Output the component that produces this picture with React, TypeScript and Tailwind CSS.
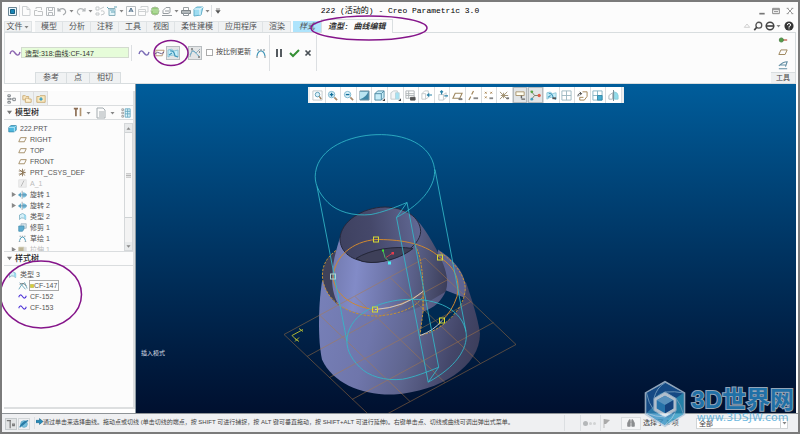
import React from "react";

type IconProps = { children: React.ReactNode; className?: string };

const Icon: React.FC<IconProps> = ({ children, className = "h-3 w-3" }) => (
  <svg
    viewBox="0 0 12 12"
    fill="none"
    stroke="#8a9298"
    className={`block shrink-0 ${className}`}
    aria-hidden="true"
  >
    {children}
  </svg>
);

const plane = <path d="M3.5 3.5H11L8.5 9H1Z" stroke="#a08a62" strokeWidth="1.2" />;
const curve = (color: string) => (
  <path d="M1 7C2 3 4 3 6 6S10 9 11 5" stroke={color} strokeWidth="1.4" />
);
const surface = (
  <>
    <path d="M2 10V4Q6 0 10 4V10L7 8Q4 7 2 10Z" fill="#d4eff8" stroke="#76aabd" />
    <path d="M8 3V8L11 10V5Z" fill="#9bd9ee" stroke="none" />
  </>
);
const cube = (
  <>
    <path d="M1 4.5L4 2H11V8L8.500 10.500H1Z" fill="#4db8df" stroke="#3a87a8" />
    <path d="M1 4.500H8.500V10.500M8.500 4.500L11 2" stroke="#d4f3fc" />
  </>
);
const revolve = (
  <>
    <path d="M0 6.500L4 3V10Z" fill="#5fb2d4" stroke="none" />
    <path d="M6 3Q11 3 11.500 6.500Q11 10 6 10Z" fill="#79bddb" stroke="none" />
    <path d="M5.500 1V12" stroke="#8b9aa3" />
    <path d="M1 6.500H12" stroke="#4c83a3" />
  </>
);
const arcCurve = (
  <>
    <path d="M2 9Q3 4 6 4T10 9" stroke="#3f96b8" strokeWidth="1.2" />
    <path d="M2 3H10M1 10H3M9 10H11" stroke="#75868f" strokeDasharray="2 1" />
  </>
);
const styleEdit = (
  <>
    <path d="M1 10V3Q5 1 7 4L11 3V10Q6 6 1 10Z" fill="#c7eef9" stroke="#8cc6d8" />
    <path d="M3 4Q7 3 8 9L11 10M5 6L2 8" stroke="#3f97bb" strokeWidth="1.2" />
  </>
);
const folderStar = (
  <>
    <path d="M1 10V3H4L5 2H11V10Z" fill="#f8e8bd" stroke="#c6a66c" />
    <path d="M6 4V8M4 6H8" stroke="#2e9ac3" strokeWidth="1.5" />
  </>
);
const structure = (
  <path d="M1 1H4V3H1ZM1 5H4V7H1ZM1 9H4V11H1ZM4 6H7M7 5H10V8H7Z" stroke="#6f757a" />
);

const Caret: React.FC = () => (
  <svg viewBox="0 0 7 12" className="block h-3 w-[7px] shrink-0" aria-hidden="true">
    <path d="M1.500 5H5.500L3.500 7.500Z" fill="#858585" />
  </svg>
);

const Separator: React.FC<{ className?: string }> = ({ className = "h-4" }) => (
  <span className={`block w-px shrink-0 bg-[#dcdfe2] ${className}`} />
);

type Quick = { label: string; icon: React.ReactNode; caret?: boolean };

const quickAccess: Quick[] = [
  { label: "新建", icon: <path d="M2.500 1.500H7L10 4.500V10.500H2.500ZM7 1.500V4.500H10" stroke="#cdd0d2" /> },
  { label: "打开", icon: <path d="M2.500 10.500V5.500H5L6 6.500H10.500V10.500ZM4 4V2.500H9.500V5" stroke="#c2c4c5" /> },
  { label: "保存", icon: <path d="M2.500 2.500H10.500V10.500H2.500ZM4.500 2.500V5.500H8.500V2.500M4.500 10V7.500H8.500V10" stroke="#b6babd" /> },
  { label: "撤消", caret: true, icon: <path d="M2 3V6H5M2 6Q6 2 9 5Q11 8 7 10" stroke="#a4a8ab" strokeWidth="1.200" /> },
  { label: "重做", caret: true, icon: <path d="M10 3V6H7M10 6Q6 2 3 5Q1 8 5 10" stroke="#b4b8ba" strokeWidth="1.200" /> },
  { label: "重新生成", icon: <path d="M2 2H5V5H2ZM2 8H5V10H2ZM6 4L10 2M7 6Q11 5 10 9L7 10" stroke="#c4c8ca" /> },
  { label: "重新生成管理器", caret: true, icon: (
    <>
      <path d="M3 3.500H9V10.500H3Z" fill="#e3f4f9" stroke="#8db2bd" />
      <path d="M4 5H8M5 7H9M1 2L3 4M8 2H11" stroke="#62a4b8" />
    </>
  ) },
  { label: "注释", icon: (
    <>
      <path d="M1.500 1.500H10.500V10.500H1.500Z" stroke="#b7bcbf" />
      <path d="M4 7L6 3L8 7M5 6H7" stroke="#496b86" />
    </>
  ) },
  { label: "窗口", icon: <path d="M4 3V1.500H11V7H9M1.500 4.500H8.500V10.500H1.500ZM1.500 6.500H8.500" stroke="#cfd2d3" /> },
  { label: "模型播放器", icon: (
    <>
      <circle cx="6" cy="6" r="4" fill="#93cc76" stroke="#a9bd9c" />
      <path d="M2 5H10M4 7H9" stroke="#c4e3b3" />
    </>
  ) },
  { label: "视图", caret: true, icon: <path d="M2 8.500V5.500L5 2.500H9V7.500L7 8.500H2ZM1 10.500H11M4 6H8" stroke="#979da1" /> },
  { label: "打印", icon: (
    <>
      <path d="M3.500 5V2.500H8.500V5" stroke="#9aa0a3" />
      <path d="M1.500 5.500H10.500V8.500H1.500Z" fill="#b2b8bb" stroke="#7f868a" />
      <path d="M3.500 8.500H8.500V10.500H3.500Z" fill="#fff" />
    </>
  ) },
  { label: "零件", caret: true, icon: (
    <>
      <path d="M2 4L5 2H11L9 10L2 11Z" fill="#9ddcf1" stroke="#65b0cb" />
      <path d="M2 4H8V10M8 4L11 2" stroke="#eefafd" />
    </>
  ) },
];

const ribbonTabs = ["模型", "分析", "注释", "工具", "视图", "柔性建模", "应用程序", "渲染"];

const TitleBar: React.FC = () => (
  <header className="relative flex h-[18px] items-center pl-1 pr-1">
    <Icon>
      <path d="M2.500 2.500H10.500V10.500H2.500Z" fill="#eaf7fc" stroke="#6c8492" />
      <path d="M4.500 4.500H8.500V8.500H4.500Z" fill="#1785b5" stroke="#155e83" />
    </Icon>
    <span className="flex w-0.5 justify-center">
      <Separator className="h-3" />
    </span>
    {quickAccess.map((item) => (
      <button key={item.label} aria-label={item.label} className="flex">
        <Icon>{item.icon}</Icon>
        {item.caret && <Caret />}
      </button>
    ))}
    <Separator className="h-3" />
    <button aria-label="自定义快速访问工具栏" className="ml-0.5">
      <Icon className="h-2 w-2">
        <path d="M3 3H9" stroke="#555" />
        <path d="M2 5H10L6 10Z" fill="#555" stroke="none" />
      </Icon>
    </button>
    <h1 className="pointer-events-none absolute inset-x-0 text-center font-['Liberation_Mono','Noto_Sans_CJK_SC',monospace] text-[8px] text-black">
      222 (活动的) - Creo Parametric 3.0
    </h1>
    <div className="ml-auto flex items-center gap-1.5">
      <button aria-label="最小化">
        <Icon className="h-2 w-2"><path d="M2 10H10" stroke="#777" strokeWidth="2.500" /></Icon>
      </button>
      <button aria-label="还原">
        <Icon className="h-2 w-2"><path d="M1 2H11V10H1ZM1 4H11M3 7H9" stroke="#888" strokeWidth="1.500" /></Icon>
      </button>
      <button aria-label="关闭">
        <Icon className="h-2 w-2"><path d="M2 2L10 10M10 2L2 10M1 2H4M8 2H11M1 10H4M8 10H11" stroke="#999" strokeWidth="1.500" /></Icon>
      </button>
    </div>
  </header>
);

const TabRow: React.FC = () => (
  <nav className="flex h-3 items-end pl-0.5 pr-1 text-[8px] leading-[11px] text-[#505356]">
    <button className="mr-[3px] flex h-[11px] w-7 items-center justify-center border border-[#dfe3e5] bg-[#f0f2f3]">
      文件<Caret />
    </button>
    {ribbonTabs.map((tab) => (
      <button key={tab} className="h-[11px] border-t border-[#dfe3e5] bg-[#f0f2f3] px-1.5 leading-[10px] shadow-[inset_-1px_0_#dfe3e5]">
        {tab}
      </button>
    ))}
    <button className="ml-0.5 h-[11px] bg-[#aee4fc] px-1.5 italic">样式</button>
    <button className="relative z-10 -mb-px h-[14px] border-x border-t border-[#dadfe1] bg-[#fcfcfc] px-1.5 font-['Liberation_Mono','Noto_Sans_CJK_SC',monospace] font-bold italic text-[#333]">
      造型: 曲线编辑
    </button>
    <div className="ml-auto flex items-center gap-0.5">
      <button aria-label="最小化功能区">
        <Icon className="h-2 w-2"><path d="M2 8L6 3L10 8Z" stroke="#bbb" /></Icon>
      </button>
      <button aria-label="命令搜索">
        <Icon className="h-[10px] w-[10px]">
          <circle cx="7" cy="5" r="3.500" stroke="#555" strokeWidth="1.600" />
          <path d="M4.500 7.500L1.500 11" stroke="#444" strokeWidth="2" />
        </Icon>
      </button>
      <button aria-label="PTC 社区" className="flex items-center">
        <Icon className="h-[10px] w-[10px]">
          <circle cx="6" cy="6" r="4.500" stroke="#444" strokeWidth="1.800" />
          <path d="M1 6H11" stroke="#444" strokeWidth="2" />
        </Icon>
        <Caret />
      </button>
      <button aria-label="帮助">
        <Icon className="h-[10px] w-[10px]">
          <circle cx="6" cy="6" r="5.500" fill="#333" stroke="none" />
          <path d="M4 5Q4 3 6 3T8 5Q8 6 6 6.500V8M6 9V10" stroke="#fff" strokeWidth="1.200" />
        </Icon>
      </button>
    </div>
  </nav>
);

const Ribbon: React.FC = () => (
  <section className="mx-0.5 flex h-[52px] border border-[#d8dddf] bg-[#fcfcfc]">
    <div className="flex flex-1 flex-col justify-between">
      <div className="flex h-10 items-center pl-1">
        <Icon>{curve("#8b65b0")}</Icon>
        <input
          aria-label="曲线"
          readOnly
          value="造型:318:曲线:CF-147"
          className="h-[11px] w-[108px] border border-[#d3dacf] bg-[#e6fcd9] px-[3px] font-['Liberation_Sans','Noto_Sans_CJK_SC',sans-serif] text-[7px] text-[#333]"
        />
        <span className="mx-0.5"><Separator /></span>
        <button aria-label="自由曲线" className="ml-1">
          <Icon>{curve("#796bb5")}</Icon>
        </button>
        <button aria-label="平面曲线" className="ml-1">
          <Icon className="h-3 w-[11px]">
            <path d="M2 3H11L9 9H2Z" stroke="#b59370" />
            <path d="M1 7Q4 4 6 6T11 5" stroke="#655788" />
          </Icon>
        </button>
        <button aria-label="曲面上的曲线" className="ml-px border border-[#b8bdc0] bg-[#e3e5e6]">
          <Icon>{styleEdit}</Icon>
        </button>
        <button aria-label="控制点" className="ml-2 border border-[#b8bdc0] bg-[#e3e5e6]">
          <Icon>
            <path d="M1 10L3 3L7 6L11 2" stroke="#9aaeb9" />
            <path d="M1 8Q4 2 6 5T10 9" stroke="#6caecb" />
            <path d="M2 2H4M10 5H11M9 10H11" stroke="#777" strokeWidth="1.500" />
          </Icon>
        </button>
        <label className="ml-1 flex items-center gap-[3px] text-[7px] text-[#444]">
          <input type="checkbox" className="h-[7px] w-[7px] appearance-none border border-[#aaa] bg-white" />
          按比例更新
        </label>
        <button aria-label="更新" className="ml-1"><Icon>{arcCurve}</Icon></button>
        <span className="ml-0.5"><Separator className="h-9" /></span>
        <button aria-label="暂停" className="ml-[3px]">
          <Icon><path d="M4 2V10M8 2V10" stroke="#555b60" strokeWidth="2" /></Icon>
        </button>
        <button aria-label="确定" className="ml-[3px]">
          <Icon><path d="M2 6L5 9L11 3" stroke="#359035" strokeWidth="2" /></Icon>
        </button>
        <button aria-label="取消" className="ml-0.5">
          <Icon><path d="M3.500 3.500L8.500 8.500M8.500 3.500L3.500 8.500" stroke="#484f55" strokeWidth="1.700" /></Icon>
        </button>
        <span className="ml-0.5"><Separator className="h-9" /></span>
      </div>
      <div className="ml-[30px] flex h-[11px] text-[8px] leading-[10px] text-[#555]">
        {["参考", "点", "相切"].map((name) => (
          <button key={name} className="border-r border-t border-[#d9dee0] bg-[#f0f2f3] px-[7px] first:border-l">
            {name}
          </button>
        ))}
      </div>
    </div>
    <div className="flex w-6 flex-col items-center justify-between pt-0.5">
      <button aria-label="点">
        <Icon className="h-[10px] w-[10px]">
          <path d="M5 6H11" stroke="#cc806f" strokeWidth="2" />
          <circle cx="4" cy="6" r="2.500" fill="#529c48" stroke="#4c7e46" />
        </Icon>
      </button>
      <button aria-label="平面"><Icon className="h-[10px] w-[10px]">{plane}</Icon></button>
      <button aria-label="曲面">
        <Icon className="h-[10px] w-[10px]">
          <path d="M1 7Q6 2 11 2L9 8M3 6H9M1 10.500H11" stroke="#618da3" strokeWidth="1.300" />
        </Icon>
      </button>
      <span className="w-full border-t border-[#d9dee0] bg-[#eef0f1] text-center text-[7px] leading-[10px] text-[#444]">
        工具
      </span>
    </div>
  </section>
);

type Node = { name: string; icon: React.ReactNode; branch?: boolean; dim?: boolean };

const modelTree: Node[] = [
  { name: "RIGHT", icon: plane },
  { name: "TOP", icon: plane },
  { name: "FRONT", icon: plane },
  { name: "PRT_CSYS_DEF", icon: (
    <path d="M2 2L6 6L2 10M1 4H5M1 8H6M6 1V11M6 6H10M9 5V7M9 2L6 6L9 10" stroke="#8b7555" strokeWidth="1.200" />
  ) },
  { name: "A_1", dim: true, icon: (
    <>
      <path d="M1 1H11V11H1Z" fill="#eee" stroke="#ddd" />
      <path d="M8 2L4 10" stroke="#aaa" />
    </>
  ) },
  { name: "旋转 1", branch: true, icon: revolve },
  { name: "旋转 2", branch: true, icon: revolve },
  { name: "类型 2", icon: surface },
  { name: "修剪 1", icon: (
    <>
      <path d="M4 1H11V7H4Z" fill="#d5e4eb" stroke="#9eb2bf" />
      <path d="M1 4H8V8L6 11H1Z" fill="#5dacd0" stroke="#488fae" />
    </>
  ) },
  { name: "草绘 1", icon: arcCurve },
  { name: "拉伸 1", branch: true, dim: true, icon: (
    <>
      <path d="M1 3H8V10H1Z" fill="#bdb493" stroke="#c4bda2" />
      <path d="M8 3H11V8H8Z" fill="#ddd" stroke="#ddd" />
    </>
  ) },
];

const PanelHeader: React.FC<{ title: string; children?: React.ReactNode }> = ({ title, children }) => (
  <div className="flex h-[14px] shrink-0 items-center border-b border-[#dadddf] pl-[3px]">
    <svg viewBox="0 0 7 7" className="mr-[3px] block h-[5px] w-[5px]" aria-hidden="true">
      <path d="M0 1H7L3.500 6Z" fill="#777" />
    </svg>
    <h2 className="text-[8px] font-medium text-[#222]">{title}</h2>
    {children}
  </div>
);

const SidePanel: React.FC = () => (
  <aside className="flex w-[134px] shrink-0 flex-col border-r border-[#8d9aa2] bg-white pb-1 pl-0.5 pt-[7px]">
    <div className="flex min-h-0 flex-1 flex-col border-b-2 border-r-2 border-[#dddfe0] bg-[#fcfcfc]">
      <div className="flex h-[15px] shrink-0 border-b border-[#dadddf]">
        <button aria-label="模型树" className="flex w-4 items-center justify-center border-t border-[#ddd]">
          <Icon className="h-[10px] w-[10px]">{structure}</Icon>
        </button>
        <button aria-label="文件夹浏览器" className="flex w-[14px] items-center justify-center border-x border-t border-[#ddd] bg-[#edf0f1]">
          <Icon className="h-[10px] w-[10px]">
            <path d="M1 7V2H4L5 3H8V7Z" fill="#f9e8c4" stroke="#c9a76d" />
            <path d="M4 10V5H7L8 6H11V10Z" fill="#fff2d2" stroke="#c9a76d" />
          </Icon>
        </button>
        <button aria-label="收藏夹" className="flex w-[14px] items-center justify-center border-r border-t border-[#ddd] bg-[#edf0f1]">
          <Icon className="h-[10px] w-[10px]">{folderStar}</Icon>
        </button>
      </div>
      <PanelHeader title="模型树">
        <div className="ml-auto flex items-center gap-[3px] pr-0.5">
          <button aria-label="设置" className="flex">
            <Icon className="h-[10px] w-[10px]">
              <path d="M1 2H6M3.500 2V11" stroke="#8b6d54" strokeWidth="2" />
              <path d="M9 1V11" stroke="#b09370" strokeWidth="2" />
            </Icon>
            <span className="ml-0.5 flex items-center"><Caret /></span>
          </button>
          <button aria-label="显示" className="flex">
            <Icon><path d="M2 1H8L10 3V11H2ZM4 5H9M4 7H9M4 9H9" stroke="#a4acb0" /></Icon>
            <span className="ml-0.5"><Caret /></span>
          </button>
          <button aria-label="树列" className="ml-0.5">
            <Icon className="h-[10px] w-[10px]">
              <path d="M1 1H3V3H1ZM1 5H3V7H1ZM1 9H3V11H1Z" stroke="#999" />
              <path d="M5 1H11V11H5ZM8 1V11M5 4H11M5 7H11" fill="#dff5fc" stroke="#5fa4bd" />
            </Icon>
          </button>
        </div>
      </PanelHeader>
      <div className="flex h-[131px] shrink-0 pt-[3px]">
        <ul className="flex-1 overflow-hidden text-[7px] leading-[11px] text-[#555]">
          <li className="flex h-[11px] items-center gap-[3px] pl-1">
            <Icon className="h-[9px] w-[9px]">{cube}</Icon>222.PRT
          </li>
          {modelTree.map((node) => (
            <li key={node.name} className={`flex h-[11px] items-center ${node.dim ? "text-[#bbb]" : ""}`}>
              <span className="flex w-[14px] justify-center pl-1">
                {node.branch && (
                  <svg viewBox="0 0 6 6" className="h-[5px] w-[5px]" aria-hidden="true">
                    <path d="M1 0V6L6 3Z" fill="#888" />
                  </svg>
                )}
              </span>
              <Icon className="mr-[3px] h-[9px] w-[9px]">{node.icon}</Icon>
              {node.name}
            </li>
          ))}
        </ul>
        <div className="flex w-[9px] flex-col border border-[#d5d8da] bg-[#f3f3f3]">
          <button aria-label="向上滚动" className="flex h-2 items-center justify-center bg-[#e8eaeb]">
            <Icon className="h-[5px] w-[5px]"><path d="M1 9L6 3L11 9Z" fill="#888" stroke="none" /></Icon>
          </button>
          <div className="flex h-[86px] items-center justify-center border-y border-[#cfd3d5] bg-[#fafafa]">
            <Icon className="h-[7px] w-[5px]"><path d="M0 2H12M0 6H12M0 10H12" stroke="#aaa" strokeWidth="2" /></Icon>
          </div>
          <button aria-label="向下滚动" className="mt-auto flex h-2 items-center justify-center bg-[#e8eaeb]">
            <Icon className="h-[5px] w-[5px]"><path d="M1 3H11L6 9Z" fill="#888" stroke="none" /></Icon>
          </button>
        </div>
      </div>
      <div className="border-t border-[#dadddf]">
        <PanelHeader title="样式树" />
      </div>
      <ul className="pt-[3px] text-[7px] leading-[11px] text-[#555]">
        <li className="flex h-[11px] items-center gap-[3px] pl-1">
          <Icon className="h-[9px] w-[9px]">{surface}</Icon>类型 3
        </li>
        <li className="flex h-[11px] items-center pl-[14px]">
          <Icon className="h-[10px] w-[10px]">
            <path d="M2 2L9 10M1 10L4 5L8 2L11 9" stroke="#599bb1" />
            <path d="M2 4Q6 1 10 6" stroke="#777" />
          </Icon>
          <span className="ml-px flex h-[11px] items-center border border-[#aaa] pr-px leading-[9px]">
            <Icon className="h-1 w-1"><path d="M1 1H11V11H1Z" fill="#d8cf35" stroke="#888a30" /></Icon>
            CF-147
          </span>
        </li>
        {["CF-152", "CF-153"].map((name) => (
          <li key={name} className="flex h-[11px] items-center gap-[3px] pl-[14px]">
            <Icon className="h-[9px] w-[9px]">{curve("#4c31d6")}</Icon>
            {name}
          </li>
        ))}
      </ul>
    </div>
  </aside>
);

const more = <path d="M9 12H12V9Z" fill="#444" stroke="none" />;

type Tool = { label: string; icon: React.ReactNode; pressed?: boolean };

const viewTools: Tool[] = [
  { label: "重新调整", icon: (
    <>
      <path d="M1 1H11V11H1Z" stroke="#c0c6c8" />
      <circle cx="6" cy="5" r="2.500" fill="#dbf1f9" stroke="#5a9bb6" />
      <path d="M8 7L10 10" stroke="#9b7b59" strokeWidth="1.500" />
    </>
  ) },
  { label: "放大", icon: (
    <>
      <circle cx="5" cy="5" r="3.500" fill="#dff4fb" stroke="#76b4cd" />
      <path d="M3 5H7M5 3V7" stroke="#116e9a" strokeWidth="1.500" />
      <path d="M8 8L11 11" stroke="#a88a6c" strokeWidth="1.800" />
    </>
  ) },
  { label: "缩小", icon: (
    <>
      <circle cx="5" cy="5" r="3.500" fill="#dff4fb" stroke="#76b4cd" />
      <path d="M3 5H7" stroke="#116e9a" strokeWidth="1.500" />
      <path d="M8 8L11 11" stroke="#a88a6c" strokeWidth="1.800" />
    </>
  ) },
  { label: "重画", icon: (
    <>
      <path d="M1 1H11V11H1Z" fill="#3f87a6" stroke="#809ba7" />
      <path d="M1 2H10Q8 8 1 10Z" fill="#b9e4f1" stroke="none" />
    </>
  ) },
  { label: "显示样式", icon: (
    <>
      <path d="M1 4L4 1H11V8L8 11H1Z" fill="#c7edf8" stroke="#4d88a1" />
      <path d="M1 4H8V11M8 4L11 1" stroke="#4d88a1" />
      {more}
    </>
  ) },
  { label: "已保存方向", icon: (
    <>
      <path d="M1 3L4 1H8V8L6 10H1Z" fill="#f4f6f7" stroke="#bfc8cc" />
      <path d="M6 3H10V10H6Z" fill="#a5e2f2" stroke="#b6d4dc" />
      {more}
    </>
  ) },
  { label: "视图管理器", icon: (
    <>
      <path d="M1 1H10V9H1ZM1 4H10M1 6H10M4 1V9" stroke="#afb5b7" />
      <path d="M6 8H11V11H6Z" fill="#555" stroke="#555" />
    </>
  ) },
  { label: "透视图", icon: (
    <>
      <path d="M1 4L4 1H8V8L5 10H1ZM1 4H5V10" stroke="#c3c8ca" />
      <path d="M6 5.500L9 3V5H12V6H9V8Z" fill="#2b83a9" stroke="none" />
    </>
  ) },
  { label: "注释方向", icon: (
    <>
      <path d="M2 5H7V11H2ZM7 5L10 3V8L7 11" stroke="#c3c8ca" />
      <path d="M5 1V5M3.500 2.500L5 1L6.500 2.500M8 6.500H12" stroke="#2b83a9" strokeWidth="1.300" />
    </>
  ) },
  { label: "平面显示", icon: (
    <>
      {plane}
      <path d="M7.500 9.500H11V10.500H7.500Z" fill="#777" stroke="#777" />
    </>
  ) },
  { label: "轴显示", icon: (
    <>
      <path d="M6 1L4 5M3 7L1 11" stroke="#a08559" strokeWidth="1.300" />
      <path d="M6 9H11" stroke="#888" strokeWidth="2" />
    </>
  ) },
  { label: "点显示", icon: (
    <>
      <path d="M2 2L4 4M4 2L2 4M8 2L10 4M10 2L8 4M2 7L4 9M4 7L2 9" stroke="#a98451" />
      <path d="M7 9H11" stroke="#888" strokeWidth="2" />
    </>
  ) },
  { label: "坐标系显示", icon: (
    <>
      <path d="M1 2L9 10M9 2L1 10M5 3V9M2 6H10" stroke="#9b8b6a" />
      <path d="M8 9H11" stroke="#777" strokeWidth="2" />
    </>
  ) },
  { label: "注释显示", pressed: true, icon: (
    <>
      <path d="M1 2H10V6H1Z" fill="#fffef0" stroke="#a8946f" />
      <path d="M7 6V9M7 10H11" stroke="#666" strokeWidth="1.500" />
    </>
  ) },
  { label: "旋转中心", pressed: true, icon: (
    <>
      <path d="M1 1L5 6H10M5 6L1 11" stroke="#747b62" />
      <circle cx="2" cy="2" r="1.500" fill="#58a446" stroke="none" />
      <circle cx="10" cy="6" r="1.800" fill="#e05e48" stroke="none" />
      <circle cx="2" cy="10" r="1.500" fill="#4a9cba" stroke="none" />
    </>
  ) },
  { label: "样式显示", icon: <>{styleEdit}<path d="M7 9H11" stroke="#555" strokeWidth="2" /></> },
  { label: "活动平面", icon: <path d="M1 1H11V11H1ZM6 1V11M1 6H11" stroke="#9db7c1" /> },
  { label: "切换平面", icon: (
    <>
      <path d="M6 2H11V7L8 11H3V8H7" stroke="#a08050" />
      <path d="M1 7Q1 3 5 4M3 2L5 4L3 6" stroke="#444" />
    </>
  ) },
  { label: "全部视图", icon: (
    <>
      <path d="M1 1H11V11H1ZM6 1V11M1 6H11" stroke="#85b3c4" />
      <path d="M6 6H11V11H6Z" fill="#48add2" stroke="#388ba9" />
    </>
  ) },
  { label: "镜像", icon: (
    <>
      <path d="M1 10V6L5 3V10Z" stroke="#a9b5ba" />
      <path d="M7 2Q11 3 11 6V10H7Z" fill="#8fddec" stroke="#8dcdda" />
      <path d="M6 0V12" stroke="#6a8894" />
    </>
  ) },
];

const profile =
  "M407 203C395 208 382 213 371 215C353 217 337 212 328 203C318 193 314 183 315.500 173C319 148 350 136 376 135.200C405 134 431 145 434.500 169C436 185 424 203 396.500 218Z";

const handles = [
  [376, 240],
  [440, 258],
  [333, 277],
  [375, 310],
  [442, 321],
];

const Model: React.FC = () => (
  <svg
    viewBox="136 85 660 328"
    className="absolute inset-0 h-full w-full"
    fill="none"
    role="img"
    aria-label="222.PRT"
  >
    <defs>
      <linearGradient id="shell" x1="319" y1="300" x2="480" y2="345" gradientUnits="userSpaceOnUse">
        <stop offset="0" stopColor="#7780b8" />
        <stop offset="0.350" stopColor="#6f76ab" />
        <stop offset="0.600" stopColor="#5f658f" />
        <stop offset="0.850" stopColor="#44476a" />
        <stop offset="1" stopColor="#3c3e5b" />
      </linearGradient>
      <linearGradient id="dome" x1="334" y1="268" x2="448" y2="280" gradientUnits="userSpaceOnUse">
        <stop offset="0" stopColor="#747cb2" />
        <stop offset="0.200" stopColor="#828bc7" />
        <stop offset="0.500" stopColor="#6c73a6" />
        <stop offset="0.820" stopColor="#4e5375" />
        <stop offset="1" stopColor="#3b3d59" />
      </linearGradient>
      <linearGradient id="neck" x1="340" y1="240" x2="421" y2="228" gradientUnits="userSpaceOnUse">
        <stop offset="0" stopColor="#3e4160" />
        <stop offset="0.400" stopColor="#45486a" />
        <stop offset="1" stopColor="#626995" />
      </linearGradient>
    </defs>

    <path
      d="M322 282C318 308 318 342 322 360C333 384 362 396 394 395C440 392 480 367 480 334C478 319 471 297 466 283L440 270L340 270Z"
      fill="url(#shell)"
    />
    <path d="M336 251C325 260 321 270 323 281C326 293 331 300 339 306L350 280Z" fill="#3f4159" />
    <path
      d="M340 238C337 248 333 260 332.500 274C331 286 334 298 339 306C360 319 400 319 424 305L446 292C449 286 449 278 446 270C440 255 430 237 420 224L407 212Z"
      fill="url(#dome)"
    />
    <path d="M438 250C454 260 465 273 466 289L464 298L446 291C449 281 446 268 438 254Z" fill="#5e6492" />
    <path d="M446 291L464 298C460 313 444 329 420 336L423 312C434 309 442 301 446 291Z" fill="#002a52" />
    <path
      d="M340 239C341 222 362 208 385 207.500C405 208 420 217 420.700 232C420 248 393 263 372 262.700C352 262 340 253 340 239Z"
      fill="url(#neck)"
      stroke="#25283c"
    />
    <path d="M356 259C370 250 394 246 413 249C403 257 387 263 371 263Q362 263 356 259Z" fill="#3e4059" stroke="#242638" />

    <g stroke="#b17a43" strokeWidth="0.800" opacity="0.600">
      <path d="M284 335L425 258.500L516 345L375 421Z" />
      <path d="M307 357L448 280M329.500 378L471 302M352 400L493.500 323" />
      <path d="M320 316L410 402M355 297L445 383M390 278L480.500 364" />
    </g>

    <g stroke="#c49134">
      <path d="M336 251C324 260 321 270 323 282C328 304 352 317 377 316.500C400 315 416 308 423 297L423 312L420 336C442 331 463 311 465 292C467 277 453 261 439 252" strokeDasharray="2.500 1.300" />
      <path
        d="M423 292C410 302 393 309 375 310C353 308 334 295 333 277C335 257 352 242 376 240C396 240 423 242 440 258C457 269 460 282 457 297Q452 312 442 321"
        stroke="#d08830"
      />
      <path d="M415 246C421 255 424 275 423 312" strokeDasharray="2.500 1" />
    </g>
    <path d="M375 310Q405 308 423 292M420 336Q434 331 442 321" stroke="#c5c6d0" />

    <g stroke="#32b9c9" strokeWidth="1">
      <path d={profile} strokeOpacity="0.850" />
      <path d={profile} transform="translate(31.700 164.700)" strokeOpacity="0.850" />
      <path d="M317 187L347 342M435 170L466 332M407 203L438.700 367.700M396.500 218L428.200 382.700" strokeOpacity="0.850" />
    </g>

    <path d="M383 251L385 258L390 263" stroke="#51b36a" />
    <path d="M386 258L392 254" stroke="#bd4053" />
    <path d="M382 250H384V252H382Z" fill="#3bed2d" />
    <path d="M391.500 252.500H394V255H391.500Z" fill="#e63c4c" />
    <path d="M388 262H391V265H388Z" fill="#4bedf5" />
    <path d="M292 336L303 330M292 336L297 341M299 329L303 332M295 339L299 342M299 338L295 342" stroke="#aeb534" />

    {handles.map(([x, y]) => (
      <rect key={`${x}-${y}`} x={x - 2.5} y={y - 2.5} width="5" height="5" stroke={x === 333 ? "#a9d7d4" : "#d5d835"} />
    ))}
  </svg>
);

const Viewport: React.FC = () => (
  <main className="relative flex min-w-0 flex-1 flex-col bg-gradient-to-b from-[#005d9b] to-[#00102f]">
    <Model />
    <div className="relative mt-[3px] flex justify-center">
      <div className="flex h-4 w-[316px] border-x-2 border-[#eceeef] bg-white">
        {viewTools.map((tool) => (
          <button
            key={tool.label}
            aria-label={tool.label}
            className={`flex flex-1 items-center justify-center border-r border-[#dadddf] ${
              tool.pressed ? "bg-[#e2e5e7] ring-1 ring-inset ring-[#b5babd]" : ""
            }`}
          >
            <Icon className="h-[11px] w-[11px]">{tool.icon}</Icon>
          </button>
        ))}
      </div>
    </div>
    <p className="relative mb-[55px] ml-[5px] mt-auto text-[6px] leading-[10px] text-[#d7dce4]">插入模式</p>
  </main>
);

const StatusBar: React.FC = () => (
  <footer className="flex h-[19px] items-center border-t border-[#8e9397] bg-[#eff0f2] pl-[3px] pr-2.5 text-[#444]">
    <button aria-label="导航器" className="mt-0.5 border border-[#c5cacc] bg-[#e2e4e5]">
      <Icon className="h-[10px] w-[10px]"><path d="M1 2H6M5 2V11M8 6H10V8H8Z" stroke="#777" strokeWidth="1.400" /></Icon>
    </button>
    <button aria-label="浏览器" className="ml-px mt-0.5 border border-[#d3d7d9]">
      <Icon className="h-[10px] w-[10px]">
        <circle cx="6" cy="6" r="4" fill="#7bc2df" stroke="#62a9c7" />
        <path d="M1 10Q3 4 11 2M3 8L9 3" stroke="#277ba6" strokeWidth="1.500" />
      </Icon>
    </button>
    <span className="ml-1"><Separator className="h-3" /></span>
    <p className="mb-[3px] ml-px flex items-center whitespace-nowrap text-[6px] leading-[10px]">
      <Icon className="h-[7px] w-[7px]"><path d="M0 4H6V1L12 6L6 11V8H0Z" fill="#268bb8" stroke="#19658e" /></Icon>
      通过单击来选择曲线。拖动点或切线 (单击切线的端点，按 SHIFT 可进行捕捉，按 ALT 键可垂直拖动，按 SHIFT+ALT 可进行延伸)。右键单击点、切线或曲线可调出弹出式菜单。
    </p>
    <div className="ml-auto flex shrink-0 items-center">
      <Separator />
      <span className="ml-[15px]"><Separator /></span>
      <span className="ml-0.5 flex items-center gap-px">
        <span className="h-[5px] w-[5px] rounded-full bg-[#b4b7b9]" />
        <span className="h-[3px] w-[3px] rounded-full bg-[#d1d3d4]" />
        <span className="h-[3px] w-[3px] rounded-full bg-[#d1d3d4]" />
      </span>
      <span className="ml-1"><Separator /></span>
      <Icon className="h-3 w-3"><path d="M3 2V11" stroke="#bbb" /><path d="M3 2L9 3L5 7H3Z" fill="#aaa" stroke="none" /></Icon>
      <button aria-label="查找" className="ml-2 flex h-[13px] w-5 items-center justify-center border border-[#dadddf] bg-[#f4f5f6]">
        <Icon className="h-[10px] w-[10px]">
          <path d="M2 10V6L4 2H5V10ZM7 10V2H8L10 6V10ZM5 5H7" fill="#8b8d8f" stroke="#8b8d8f" />
        </Icon>
      </button>
      <span className="ml-0.5 w-[53px] text-[7px]">选择了 1 项</span>
      <span className="relative flex">
        <select
          aria-label="选择过滤器"
          className="h-[11px] w-[92px] appearance-none border border-[#d0d4d6] bg-white pl-0.5 text-[7px] leading-[9px]"
        >
          <option>全部</option>
        </select>
        <span className="pointer-events-none absolute inset-y-0 right-0 flex items-center border-l border-[#d0d4d6]">
          <Caret />
        </span>
      </span>
    </div>
  </footer>
);

const Watermark: React.FC = () => (
  <div className="pointer-events-none absolute bottom-1 right-1 flex items-center gap-[3px] opacity-80">
    <svg viewBox="0 0 46 52" className="h-12 w-[46px]" fill="none" aria-hidden="true">
      <path d="M23 2L44 14V37L23 50L2 37V14Z" fill="#267cb4" stroke="#b5c9dc" strokeWidth="2" />
      <path d="M23 3L43 14L34 20L22 13Q11 15 11 28L3 36V14Z" fill="#1b5798" />
      <path d="M3 36L12 28Q16 40 27 41L23 49Z" fill="#3390c4" />
      <path d="M23 49L27 41Q38 36 35 20L43 14V37Z" fill="#2d9bc4" />
      <path d="M23 13L35 20V33L23 40L11 33V20Z" fill="#dfeaf3" stroke="#b6d4e8" />
      <path d="M23 17L32 22V31L23 36L14 31V22Z" fill="#2f8bc8" />
      <path d="M14 22L23 27L32 22L23 17Z" fill="#6fb0de" />
      <path d="M23 27V36L32 31V22Z" fill="#194f91" />
      <path d="M23 3Q14 8 11 20M43 14Q34 12 23 13M43 37Q40 26 35 20M23 49Q32 42 35 33M3 36Q13 40 23 40M3 14Q5 25 11 33" stroke="#8bb9da" />
    </svg>
    <div className="flex flex-col items-center whitespace-nowrap">
      <span className="font-['Liberation_Sans','Noto_Sans_CJK_SC',sans-serif] text-[24px] font-bold leading-[26px] text-[#2888c4] [-webkit-text-stroke:2px_#b9cad9] [paint-order:stroke_fill]">
        3D世界网
      </span>
      <span className="font-['DejaVu_Sans',sans-serif] text-[11px] leading-[9px] text-[#4da9d9]">
        www.3DSJW.com
      </span>
    </div>
  </div>
);

const Callouts: React.FC = () => (
  <svg className="h-full w-full" fill="none" stroke="#85158a" strokeWidth="1.500" aria-hidden="true">
    <ellipse cx="171" cy="53" rx="17" ry="12.500" />
    <ellipse cx="369" cy="28" rx="58" ry="12" />
    <ellipse cx="41" cy="294.500" rx="40.500" ry="33.500" />
  </svg>
);

const App: React.FC = () => {
  return (
    <div className="relative flex min-h-screen flex-col overflow-hidden border-2 border-[#7b7b7b] bg-[#fcfcfc] font-['Liberation_Sans','Noto_Sans_CJK_SC',sans-serif]">
      <TitleBar />
      <TabRow />
      <Ribbon />
      <div className="flex flex-1 pr-0.5">
        <SidePanel />
        <Viewport />
      </div>
      <StatusBar />
      <Watermark />
      <div className="pointer-events-none absolute -inset-0.5 z-20">
        <Callouts />
      </div>
    </div>
  );
};

export default App;
